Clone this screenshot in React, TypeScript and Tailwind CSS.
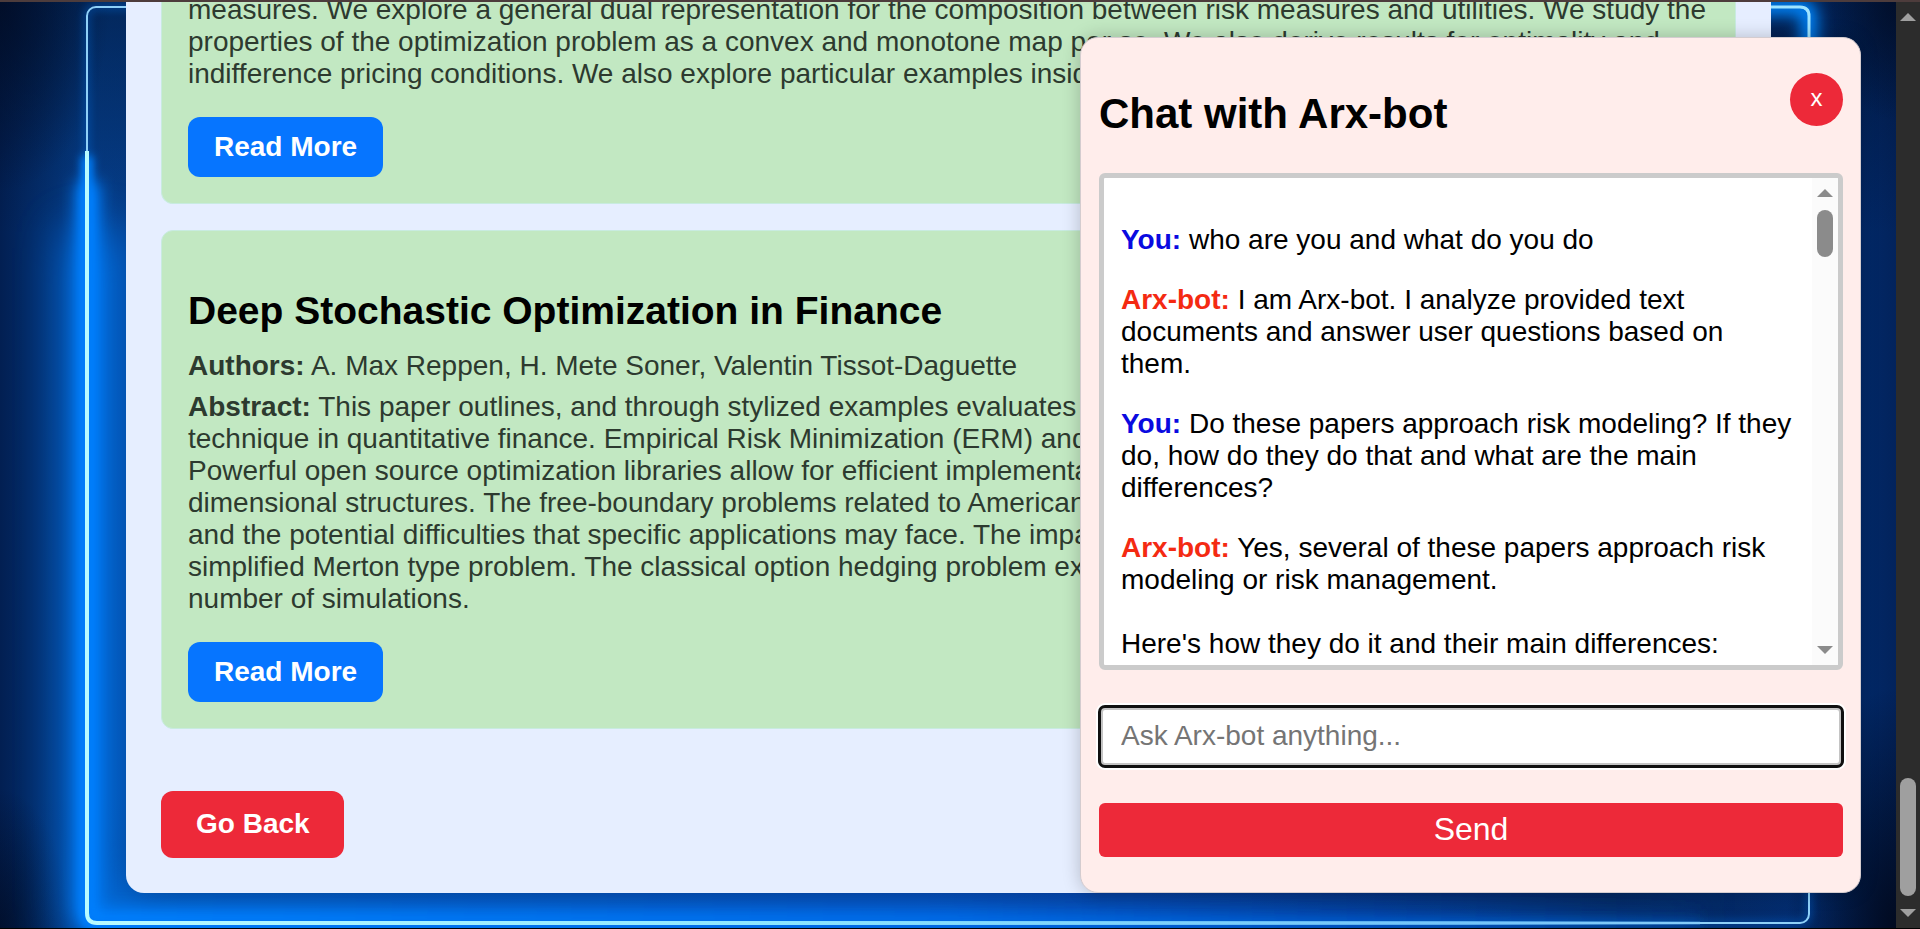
import React from "react";

function Backdrop() {
  return (
    <svg className="absolute inset-0 h-full w-full" viewBox="0 0 1896 926" preserveAspectRatio="none" aria-hidden="true">
      <defs>
        <linearGradient id="base" x1="0" x2="1" y1="0" y2="0">
          <stop offset="0" stopColor="#021f52" />
          <stop offset="0.045" stopColor="#053f8c" />
          <stop offset="0.3" stopColor="#08388a" />
          <stop offset="0.6" stopColor="#0a3488" />
          <stop offset="0.85" stopColor="#05265c" />
          <stop offset="0.96" stopColor="#033078" />
          <stop offset="1" stopColor="#02235c" />
        </linearGradient>
        <linearGradient id="topShade" x1="0" x2="0" y1="0" y2="1">
          <stop offset="0" stopColor="#01102c" stopOpacity="0.5" />
          <stop offset="0.25" stopColor="#01102c" stopOpacity="0" />
          <stop offset="0.85" stopColor="#01102c" stopOpacity="0" />
          <stop offset="1" stopColor="#01102c" stopOpacity="0.1" />
        </linearGradient>
        <linearGradient id="fade" gradientUnits="userSpaceOnUse" x1="87" x2="1809" y1="0" y2="0">
          <stop offset="0" stopColor="#0080ff" />
          <stop offset="0.5" stopColor="#0068e4" />
          <stop offset="0.75" stopColor="#0050c0" stopOpacity="0.6" />
          <stop offset="1" stopColor="#0050b0" stopOpacity="0" />
        </linearGradient>
        <linearGradient id="core" gradientUnits="userSpaceOnUse" x1="87" x2="1809" y1="0" y2="0">
          <stop offset="0" stopColor="#b8fbff" />
          <stop offset="0.4" stopColor="#8be6ff" />
          <stop offset="0.8" stopColor="#6cc0f8" stopOpacity="0.8" />
          <stop offset="1" stopColor="#6cc0f8" stopOpacity="0" />
        </linearGradient>
        <radialGradient id="corner">
          <stop offset="0" stopColor="#010a20" />
          <stop offset="1" stopColor="#010a20" stopOpacity="0" />
        </radialGradient>
        <filter id="wide" filterUnits="userSpaceOnUse" x="-100" y="-100" width="2100" height="1200">
          <feGaussianBlur stdDeviation="24" />
        </filter>
        <filter id="near" filterUnits="userSpaceOnUse" x="-100" y="-100" width="2100" height="1200">
          <feGaussianBlur stdDeviation="8" />
        </filter>
        <filter id="tight" filterUnits="userSpaceOnUse" x="-100" y="-100" width="2100" height="1200">
          <feGaussianBlur stdDeviation="4" />
        </filter>
      </defs>
      <rect width="1896" height="926" fill="url(#base)" />
      <rect width="1896" height="926" fill="url(#topShade)" />
      <ellipse cx="0" cy="0" rx="110" ry="190" fill="url(#corner)" opacity="0.7" />
      <ellipse cx="0" cy="926" rx="70" ry="140" fill="url(#corner)" opacity="0.7" />
      <ellipse cx="1896" cy="0" rx="70" ry="120" fill="url(#corner)" opacity="0.7" />
      <ellipse cx="1896" cy="926" rx="110" ry="240" fill="url(#corner)" />
      <path d="M95 230V911Q95 921 105 921H1700" fill="none" stroke="url(#fade)" strokeWidth="60" filter="url(#wide)" opacity="0.7" />
      <path d="M88 180V906Q88 919 100 919H1700" fill="none" stroke="url(#fade)" strokeWidth="24" filter="url(#near)" />
      <path d="M87 154V911Q87 921 97 921H1700" fill="none" stroke="url(#fade)" strokeWidth="12" filter="url(#tight)" />
      <rect x="87" y="5" width="1722" height="916" rx="9" fill="none" stroke="#0070e8" strokeWidth="5" filter="url(#tight)" opacity="0.5" />
      <path d="M1700 5H1800Q1809 5 1809 14V70" fill="none" stroke="#0088ff" strokeWidth="16" filter="url(#near)" />
      <rect x="87" y="5" width="1722" height="916" rx="9" fill="none" stroke="#8fd0f8" strokeWidth="2" />
      <path d="M1700 5H1800Q1809 5 1809 14V70" fill="none" stroke="#9fe4ff" strokeWidth="3" />
      <path d="M87 149V911Q87 921 97 921H1700" fill="none" stroke="url(#core)" strokeWidth="4" />
    </svg>
  );
}

function Arrow({ down = false, className = "" }: { down?: boolean; className?: string }) {
  return (
    <svg viewBox="0 0 16 8" className={`h-2 w-4 ${className}`} fill="currentColor" aria-hidden="true">
      <path d={down ? "M0 0H16L8 8Z" : "M0 8H16L8 0Z"} />
    </svg>
  );
}

function ReadMore() {
  return (
    <a href="#paper" className="mt-[27px] inline-flex h-15 items-center rounded-xl bg-[#0675ff] px-[26px] align-top font-bold text-white">
      Read More
    </a>
  );
}

function Paper({ title, authors, children }: { title: string; authors: string; children: React.ReactNode }) {
  return (
    <article className="rounded-xl border border-[#c8ebe0] bg-[#c2e8c2] p-[26px] text-[#2d3a2f]">
      <h3 className="mt-8 text-[39px] leading-11 font-bold text-black">{title}</h3>
      <p className="mt-[17px]">
        <strong>Authors:</strong> {authors}
      </p>
      <p className="mt-[9px]">
        <strong>Abstract:</strong> {children}
      </p>
      <ReadMore />
    </article>
  );
}

const messages = [
  { bot: false, text: "who are you and what do you do" },
  { bot: true, text: "I am Arx-bot. I analyze provided text documents and answer user questions based on them." },
  { bot: false, text: "Do these papers approach risk modeling? If they do, how do they do that and what are the main differences?" },
  { bot: true, text: "Yes, several of these papers approach risk modeling or risk management." },
];

function Chat() {
  return (
    <section className="absolute top-[35px] right-[35px] bottom-[35px] flex w-[781px] flex-col rounded-[18px] border border-[#d4cccf] bg-[#ffedeb] py-[35px] pr-[17px] pl-[18px] shadow-[0_0_18px_rgba(0,0,0,0.22)]">
      <header className="flex h-[100px] items-start justify-between">
        <h2 className="mt-[17px] text-[42px] leading-12 font-bold text-black">Chat with Arx-bot</h2>
        <button type="button" aria-label="Close chat" className="h-[53px] w-[53px] rounded-full bg-[#ed2939] pb-1 text-[24px] text-white">
          x
        </button>
      </header>
      <div className="flex min-h-0 flex-1 overflow-hidden rounded-md border-5 border-[#cbcbcb] bg-white text-black">
        <div className="min-w-0 flex-1 overflow-hidden px-[17px] pt-[46px]">
          {messages.map((m) => (
            <p key={m.text} className="mb-7">
              <strong className={m.bot ? "text-[#f42a12]" : "text-[#0a0ae0]"}>{m.bot ? "Arx-bot:" : "You:"}</strong> {m.text}
            </p>
          ))}
          <p className="mt-8">Here's how they do it and their main differences:</p>
        </div>
        <div className="flex w-[26px] flex-col items-center bg-[#fbfbfb] py-[11px] text-[#8b8b8b]">
          <Arrow />
          <div className="mt-[13px] h-[47px] w-4 rounded-full bg-[#8b8b8b]" />
          <Arrow down className="mt-auto" />
        </div>
      </div>
      <input
        type="text"
        aria-label="Message"
        placeholder="Ask Arx-bot anything..."
        className="mt-9 h-[61px] rounded-md border-4 border-[#c4c4c4] bg-white px-[18px] pb-[2px] shadow-[0_0_0_3px_#fff] outline-3 -outline-offset-2 outline-[#101010] placeholder:text-[#757575]"
      />
      <button type="button" className="mt-9 h-[54px] rounded-md bg-[#ed2939] pb-[2px] text-[32px] leading-9 text-white">
        Send
      </button>
    </section>
  );
}

export default function App() {
  return (
    <div className="flex h-screen overflow-hidden border-t-2 border-b border-t-[#4d3c3c] border-b-black bg-black font-['Liberation_Sans',Arial,sans-serif] text-[28px] leading-8">
      <div className="relative flex min-w-0 flex-1 flex-col justify-end overflow-hidden pr-[125px] pb-[35px] pl-[126px]">
        <Backdrop />
        <main className="relative rounded-b-[18px] bg-[#e6eeff] px-[35px] pb-[35px]">
          <div className="flex flex-col gap-[26px]">
            <article className="rounded-b-xl border border-t-0 border-[#c8ebe0] bg-[#c2e8c2] px-[26px] pb-[26px] text-[#2d3a2f]">
              <p>
                measures. We explore a general dual representation for the composition between risk measures and utilities. We study the
                properties of the optimization problem as a convex and monotone map per se. We also derive results for optimality and
                indifference pricing conditions. We also explore particular examples inside the setup.
              </p>
              <ReadMore />
            </article>
            <Paper title="Deep Stochastic Optimization in Finance" authors="A. Max Reppen, H. Mete Soner, Valentin Tissot-Daguette">
              This paper outlines, and through stylized examples evaluates a novel and highly effective computational technique in
              quantitative finance. Empirical Risk Minimization (ERM) and neural networks are key to this approach. Powerful open source
              optimization libraries allow for efficient implementation of this algorithm making it viable in high-dimensional
              structures. The free-boundary problems related to American and Bermudan options showcase both the power and the potential
              difficulties that specific applications may face. The impact of the size of the training data is studied in a simplified
              Merton type problem. The classical option hedging problem exemplifies the need of market generators or large number of
              simulations.
            </Paper>
          </div>
          <button type="button" className="mt-[62px] block h-[67px] rounded-xl bg-[#ed2939] pr-[34px] pb-[2px] pl-[35px] font-bold text-white">
            Go Back
          </button>
        </main>
        <Chat />
      </div>
      <div className="flex w-6 shrink-0 flex-col items-center bg-[#2c2c2c] py-[11px] text-[#9f9f9f]">
        <Arrow />
        <div className="mt-auto h-[118px] w-4 rounded-full bg-[#9f9f9f]" />
        <Arrow down className="mt-[13px]" />
      </div>
    </div>
  );
}
